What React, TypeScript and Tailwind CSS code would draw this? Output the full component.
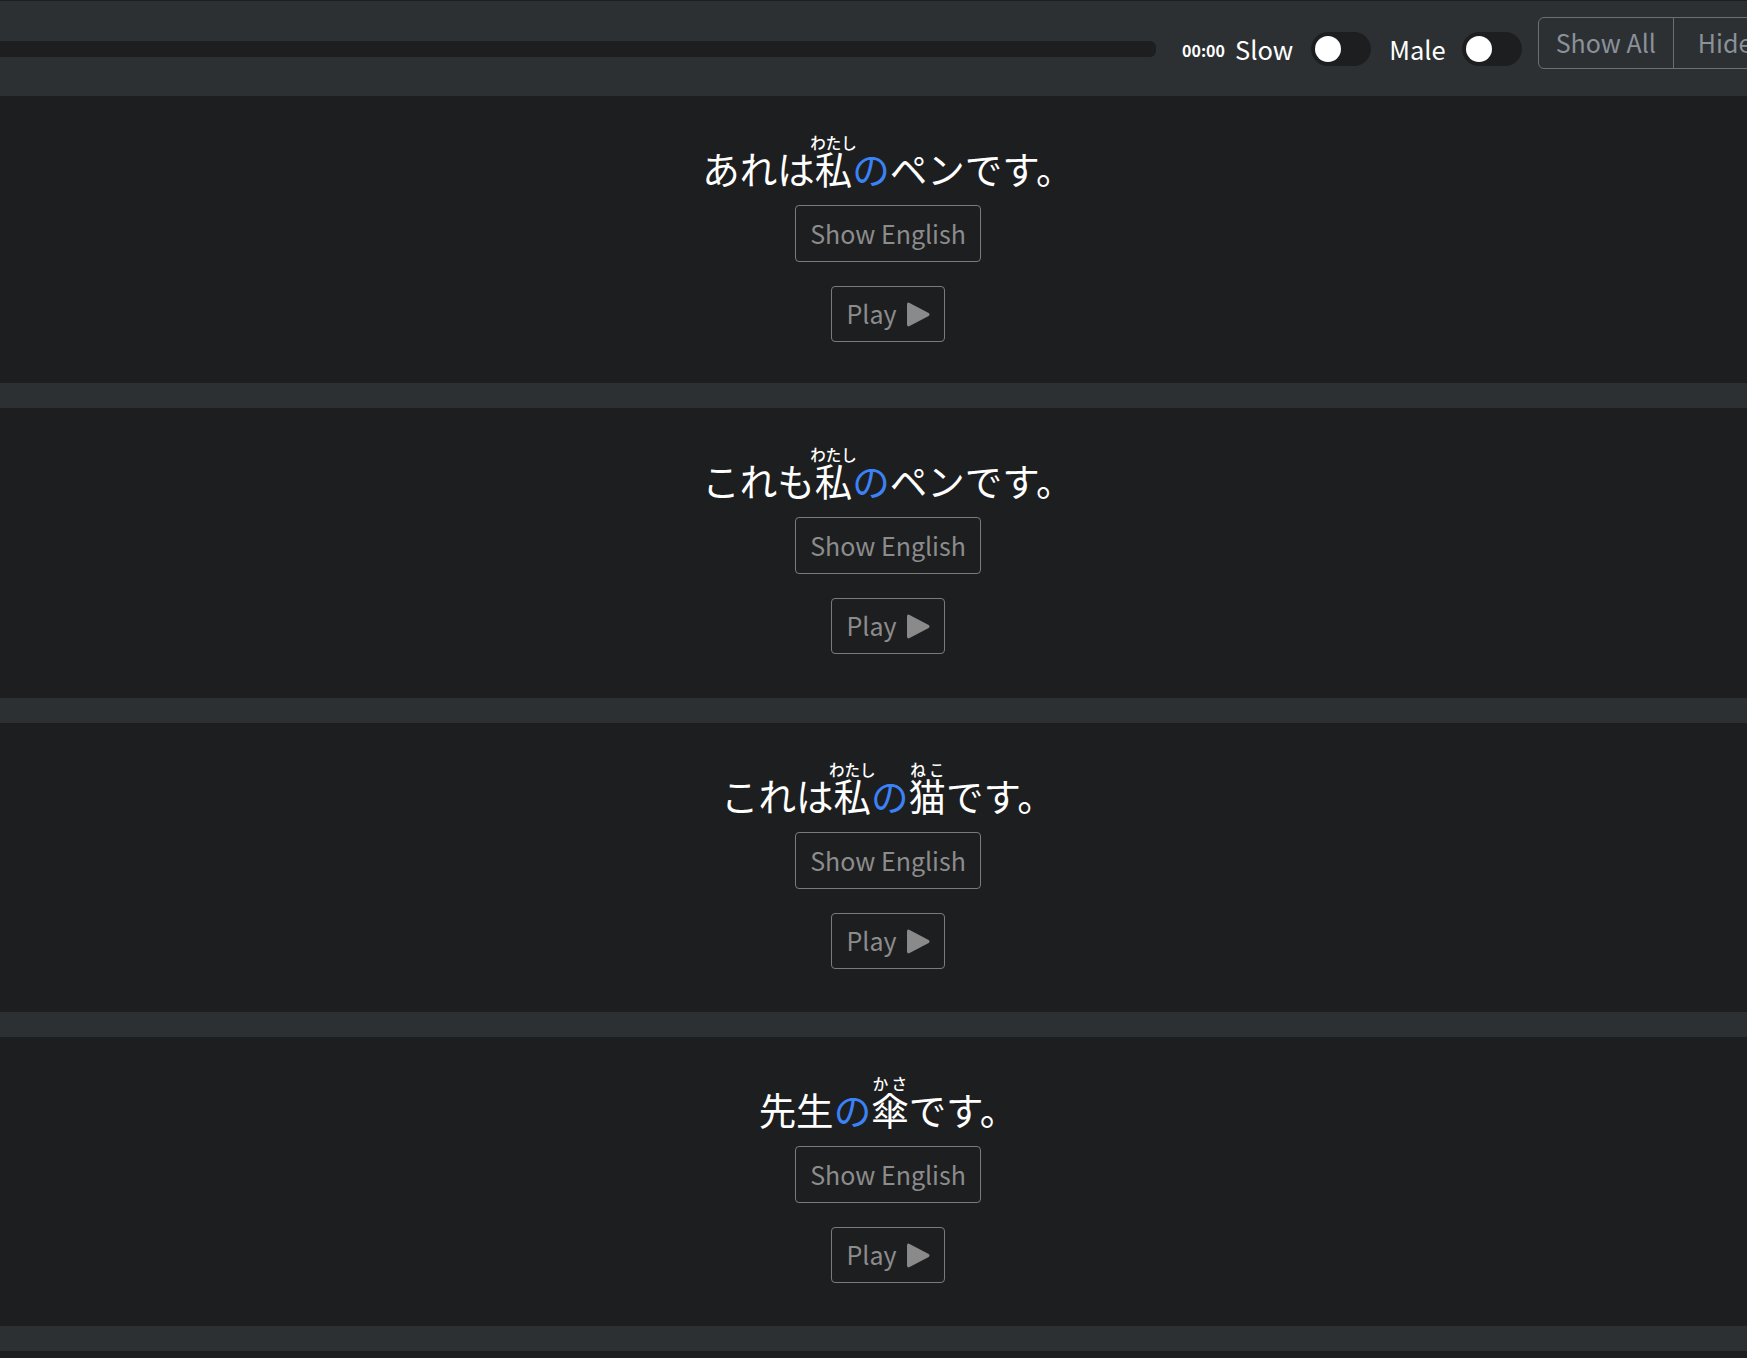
import React, { useState } from 'react'

type Part = { t: string; r?: string; blue?: boolean }

const sentences: { parts: Part[]; h: string }[] = [
  {
    h: 'h-[287px]',
    parts: [{ t: 'あれは' }, { t: '私', r: 'わたし' }, { t: 'の', blue: true }, { t: 'ペンです。' }],
  },
  {
    h: 'h-[290px]',
    parts: [{ t: 'これも' }, { t: '私', r: 'わたし' }, { t: 'の', blue: true }, { t: 'ペンです。' }],
  },
  {
    h: 'h-[289px]',
    parts: [{ t: 'これは' }, { t: '私', r: 'わたし' }, { t: 'の', blue: true }, { t: '猫', r: 'ねこ' }, { t: 'です。' }],
  },
  {
    h: 'h-[289px]',
    parts: [{ t: '先生' }, { t: 'の', blue: true }, { t: '傘', r: 'かさ' }, { t: 'です。' }],
  },
  {
    h: 'h-[289px]',
    parts: [{ t: 'それは' }, { t: '誰', r: 'だれ' }, { t: 'の', blue: true }, { t: '本', r: 'ほん' }, { t: 'ですか。' }],
  },
]

function Toggle({ on, onClick }: { on: boolean; onClick: () => void }) {
  return (
    <button
      onClick={onClick}
      className="flex h-[34px] w-[60px] shrink-0 items-center rounded-full bg-[#1d1e20] px-1"
    >
      <span className={'h-[26px] w-[26px] rounded-full bg-white transition-transform ' + (on ? 'translate-x-[26px]' : '')} />
    </button>
  )
}

function PlayIcon() {
  return (
    <svg width="23" height="25" viewBox="0 0 23 25" className="ml-[10px] inline-block">
      <path d="M2.6 0.9 L21.7 11 Q23.4 12.5 21.7 14 L2.6 24.1 Q0 25.2 0 22.3 V2.7 Q0 -0.2 2.6 0.9Z" fill="#8a8a8a" />
    </svg>
  )
}

function Card({ parts, h }: { parts: Part[]; h: string }) {
  const [shown, setShown] = useState(false)
  return (
    <section className={'flex flex-col items-center bg-[#1d1e20] pt-[39px] ' + h}>
      <p className="text-[37.5px] leading-[52px] text-white">
        {parts.map((p, i) =>
          p.r ? (
            <ruby key={i}>
              {p.t}
              <rt className="text-[15.5px] font-medium">{p.r}</rt>
            </ruby>
          ) : (
            <span key={i} className={p.blue ? 'text-[#3b82f6]' : ''}>
              {p.t}
            </span>
          )
        )}
      </p>
      <button
        onClick={() => setShown(!shown)}
        className="mt-[11px] h-[57px] rounded-[4px] border border-[#7b7b7b] px-[14px] text-[25px] text-[#8c8c8c]"
      >
        {shown ? 'Hide English' : 'Show English'}
      </button>
      <button className="mt-[24px] flex h-[56px] items-center rounded-[4px] border border-[#7b7b7b] px-[14px] text-[25px] text-[#8c8c8c]">
        Play
        <PlayIcon />
      </button>
    </section>
  )
}

export default function App() {
  const [slow, setSlow] = useState(false)
  const [male, setMale] = useState(false)

  return (
    <div className="min-h-screen w-full overflow-hidden bg-[#1d1e20] font-['Noto_Sans_CJK_JP',sans-serif]">
      <div className="w-[1776px]">
        <header className="flex h-[96px] items-center border-t border-[#1d1e20] bg-[#2c3033]">
          <div className="h-4 w-[1156px] shrink-0 rounded-r-md bg-[#1d1e20]" />
          <span className="ml-[26px] mt-[2px] text-[16px] font-bold text-white">00:00</span>
          <span className="ml-[10px] mt-[2px] text-[25.5px] text-white">Slow</span>
          <div className="ml-[18px]">
            <Toggle on={slow} onClick={() => setSlow(!slow)} />
          </div>
          <span className="ml-[18px] mt-[2px] text-[25.5px] text-white">Male</span>
          <div className="ml-[16px]">
            <Toggle on={male} onClick={() => setMale(!male)} />
          </div>
          <div className="ml-[16px] mt-[16px] flex shrink-0 self-start rounded-md border border-[#6e6e6e] text-[25px] text-[#8a9199]">
            <button className="h-[50px] px-[17px]">Show All</button>
            <button className="h-[50px] border-l border-[#6e6e6e] px-[24px]">Hide All</button>
          </div>
        </header>
        <div className="flex flex-col gap-[25px] bg-[#2c3033]">
          {sentences.map((s, i) => (
            <Card key={i} parts={s.parts} h={s.h} />
          ))}
        </div>
      </div>
    </div>
  )
}
